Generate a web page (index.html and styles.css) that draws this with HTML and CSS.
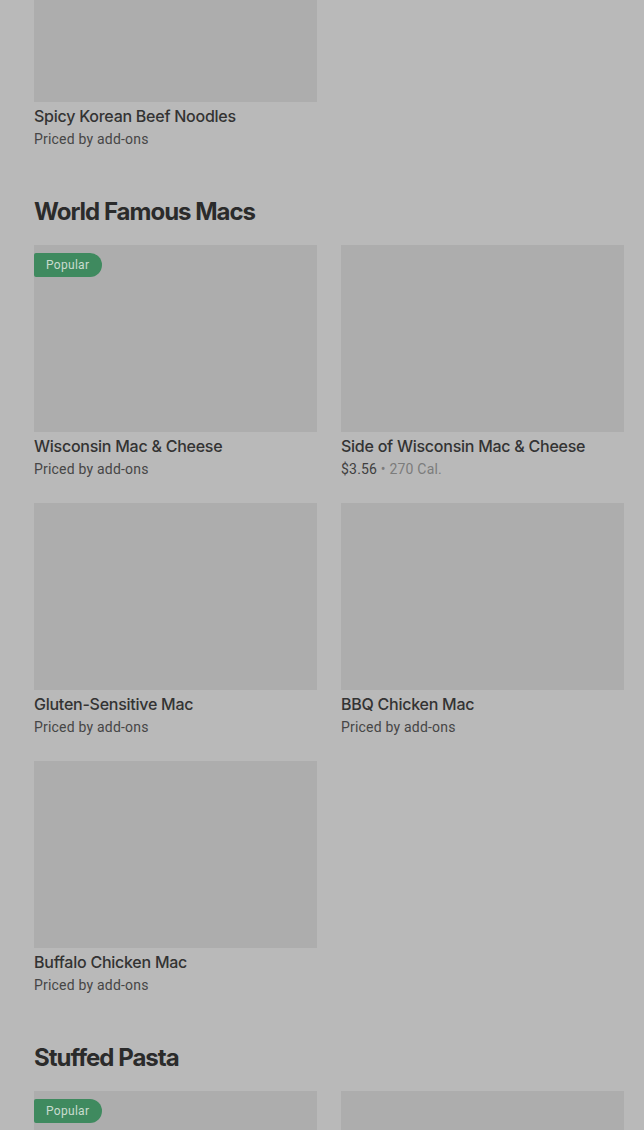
FILE: index.html
```html
<!DOCTYPE html>
<html>
<head>
<meta charset="utf-8">
<link rel="stylesheet" href="styles.css">
</head>
<body>
<div class="page">
  <section class="section first">
    <div class="grid">
      <div class="card">
        <div class="thumb"></div>
        <div class="title">Spicy Korean Beef Noodles</div>
        <div class="sub">Priced by add-ons</div>
      </div>
    </div>
  </section>

  <section class="section">
    <h2 class="heading">World Famous Macs</h2>
    <div class="grid">
      <div class="card">
        <div class="thumb"><span class="badge">Popular</span></div>
        <div class="title">Wisconsin Mac &amp; Cheese</div>
        <div class="sub">Priced by add-ons</div>
      </div>
      <div class="card">
        <div class="thumb"></div>
        <div class="title">Side of Wisconsin Mac &amp; Cheese</div>
        <div class="sub"><span class="price">$3.56</span> <span class="cal">• 270 Cal.</span></div>
      </div>
      <div class="card">
        <div class="thumb"></div>
        <div class="title">Gluten-Sensitive Mac</div>
        <div class="sub">Priced by add-ons</div>
      </div>
      <div class="card">
        <div class="thumb"></div>
        <div class="title">BBQ Chicken Mac</div>
        <div class="sub">Priced by add-ons</div>
      </div>
      <div class="card">
        <div class="thumb"></div>
        <div class="title">Buffalo Chicken Mac</div>
        <div class="sub">Priced by add-ons</div>
      </div>
    </div>
  </section>

  <section class="section">
    <h2 class="heading">Stuffed Pasta</h2>
    <div class="grid">
      <div class="card">
        <div class="thumb"><span class="badge">Popular</span></div>
      </div>
      <div class="card">
        <div class="thumb"></div>
      </div>
    </div>
  </section>
</div>
</body>
</html>
```

FILE: styles.css
```css
html, body {
  margin: 0;
  padding: 0;
  background: #b9b9b9;
  overflow: hidden;
}
.page {
  padding: 0 20px 0 34px;
  font-family: "Inter", "Roboto", sans-serif;
  color: #2f2f2f;
}
.section.first {
  margin-top: -85px;
}
.heading {
  margin: 47px 0 17px;
  font-size: 24px;
  line-height: 32px;
  font-weight: 700;
  letter-spacing: -1px;
  color: #2b2b2b;
}
.grid {
  display: grid;
  grid-template-columns: 283px 283px;
  column-gap: 24px;
  row-gap: 24px;
}
.thumb {
  position: relative;
  height: 187px;
  background: #adadad;
}
.badge {
  position: absolute;
  left: 0;
  top: 8px;
  height: 24px;
  padding: 0 13px 0 12px;
  line-height: 24px;
  font-family: "Roboto", sans-serif;
  font-size: 12px;
  letter-spacing: 0.3px;
  color: #c9dccf;
  background: #3f8a5f;
  border-radius: 2px 12px 12px 2px;
}
.title {
  margin-top: 4px;
  font-size: 16px;
  line-height: 20px;
  font-weight: 500;
  letter-spacing: -0.25px;
  color: #333333;
}
.sub {
  margin-top: 3px;
  font-family: "Roboto", sans-serif;
  font-size: 14px;
  line-height: 20px;
  letter-spacing: 0.2px;
  color: #464646;
}
.price {
  color: #3f3f3f;
}
.cal {
  color: #7c7c7c;
}
```
